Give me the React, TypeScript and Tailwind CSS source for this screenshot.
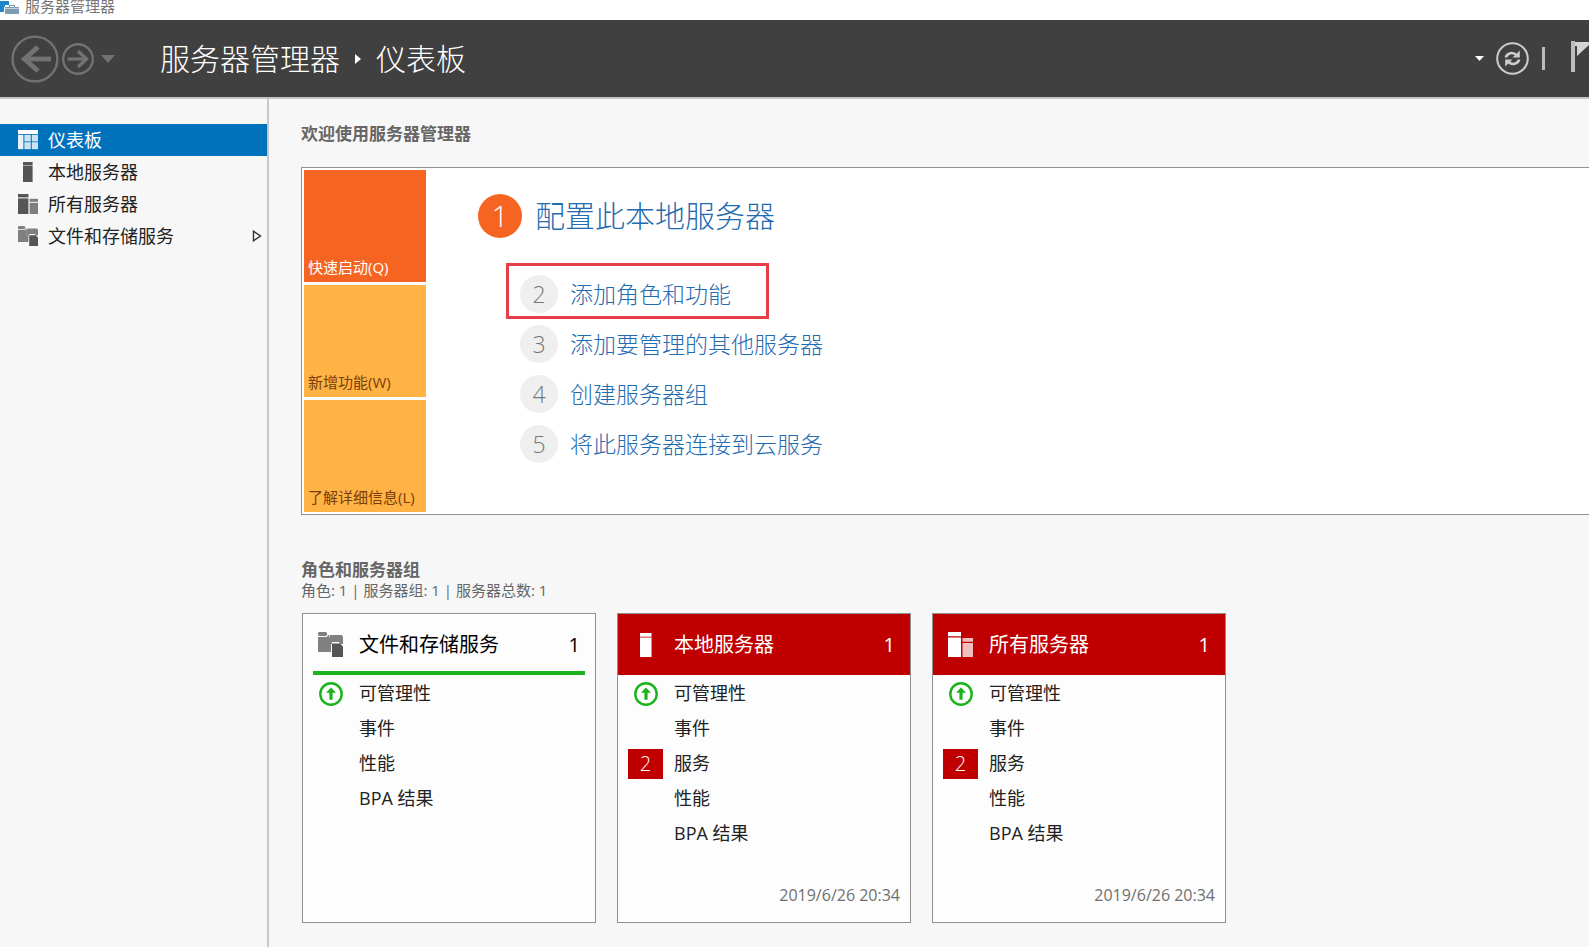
import type { ReactNode } from 'react';

interface IconProps {
  className?: string;
}

interface CardRow {
  label: string;
  status?: 'ok';
  alerts?: number;
}

interface RoleCard {
  title: string;
  count: number;
  icon: ReactNode;
  alert: boolean;
  rows: CardRow[];
  updated?: string;
}

function DashboardIcon({ className }: IconProps) {
  return (
    <svg viewBox="0 0 20 20" fill="currentColor" className={className} aria-hidden="true">
      <rect x="0" y="0" width="20" height="4" />
      <rect x="0" y="4.8" width="5.4" height="14.4" opacity="0.9" />
      <rect x="6.4" y="4.8" width="6.4" height="6.6" opacity="0.8" />
      <rect x="6.4" y="12.2" width="6.4" height="7" opacity="0.8" />
      <rect x="13.8" y="4.8" width="6.2" height="6.6" opacity="0.8" />
      <rect x="13.8" y="12.2" width="6.2" height="7" opacity="0.8" />
    </svg>
  );
}

function ServerIcon({ className }: IconProps) {
  return (
    <svg viewBox="0 0 20 20" fill="currentColor" className={className} aria-hidden="true">
      <rect x="5" y="0" width="9.6" height="3" />
      <rect x="5" y="3" width="9.6" height="1" opacity="0.5" />
      <rect x="5" y="4" width="9.6" height="16" />
    </svg>
  );
}

function ServersIcon({ className }: IconProps) {
  return (
    <svg viewBox="0 0 20 20" fill="currentColor" className={className} aria-hidden="true">
      <rect x="0" y="0" width="10.4" height="3.4" />
      <rect x="0" y="4.4" width="10.4" height="15.6" />
      <rect x="11.6" y="4.8" width="8.4" height="3" opacity="0.75" />
      <rect x="11.6" y="8.8" width="8.4" height="11.2" opacity="0.75" />
    </svg>
  );
}

function StorageIcon({ className }: IconProps) {
  return (
    <svg viewBox="0 0 25 25" className={className} aria-hidden="true">
      <path d="M1 0h7l1 1v2l-1 1h-7l-1-1v-2z" fill="#808080" />
      <path d="M0 5h9l1-2h1v9h2v8h-13z" fill="#808080" />
      <path d="M11 6l1-3h12l1 2v7h-3l-1-2h-7v2h-3z" fill="#808080" />
      <path d="M14 11.500h8l3 3v10.500h-11z" fill="#555" />
    </svg>
  );
}

function HealthyIcon() {
  return (
    <svg viewBox="0 0 24 24" className="size-6" role="img" aria-label="正常">
      <circle cx="12" cy="12" r="10.7" fill="#fff" stroke="#18b41a" strokeWidth="2.4" />
      <path d="M12 5.5l5 5.2h-3.400v7h-3.200v-7h-3.400z" fill="#18b41a" />
    </svg>
  );
}

const NAV_ITEMS = [
  { label: '仪表板', icon: <DashboardIcon className="size-5" />, active: true },
  { label: '本地服务器', icon: <ServerIcon className="size-5 text-[#555]" /> },
  { label: '所有服务器', icon: <ServersIcon className="size-5 text-[#555]" /> },
  { label: '文件和存储服务', icon: <StorageIcon className="size-5" />, expandable: true },
];

const STEPS = [
  { number: 2, label: '添加角色和功能', highlighted: true },
  { number: 3, label: '添加要管理的其他服务器' },
  { number: 4, label: '创建服务器组' },
  { number: 5, label: '将此服务器连接到云服务' },
];

const SERVER_ROWS: CardRow[] = [
  { label: '可管理性', status: 'ok' },
  { label: '事件' },
  { label: '服务', alerts: 2 },
  { label: '性能' },
  { label: 'BPA 结果' },
];

const CARDS: RoleCard[] = [
  {
    title: '文件和存储服务',
    count: 1,
    icon: <StorageIcon className="size-[25px]" />,
    alert: false,
    rows: SERVER_ROWS.filter((row) => row.label !== '服务'),
  },
  {
    title: '本地服务器',
    count: 1,
    icon: <ServerIcon className="size-6" />,
    alert: true,
    rows: SERVER_ROWS,
    updated: '2019/6/26 20:34',
  },
  {
    title: '所有服务器',
    count: 1,
    icon: <ServersIcon className="size-[25px]" />,
    alert: true,
    rows: SERVER_ROWS,
    updated: '2019/6/26 20:34',
  },
];

function TitleBar() {
  return (
    <div className="flex h-5 items-start gap-[5px] bg-white text-[15px] leading-3 text-[#777]">
      <svg viewBox="0 0 20 15" className="h-[15px] w-5 shrink-0" aria-hidden="true">
        <path d="M0 1h9v4h-4v2h-1v5h-4z" fill="#1c86c8" />
        <path d="M5 7h4v-2h6v2h4v7h-14z" fill="#7f9bb3" />
        <path d="M10 6h4v1h-4z" fill="#fff" />
        <path d="M5 8h14v1h-14z" fill="#c3d2de" />
      </svg>
      <span>服务器管理器</span>
    </div>
  );
}

function Header() {
  return (
    <header className="flex h-[79px] items-center overflow-hidden border-b-2 border-[#c4c4c4] bg-[#404040] text-white">
      <div className="flex items-center pl-[11px] text-[#727272]">
        <button type="button" aria-label="后退">
          <svg viewBox="0 0 48 48" className="size-12" fill="none" stroke="currentColor">
            <circle cx="24" cy="24" r="22.4" strokeWidth="2.4" />
            <path d="M40 24H13" strokeWidth="4.8" />
            <path d="M27 12L13.500 24L27 36" strokeWidth="5" />
          </svg>
        </button>
        <button type="button" aria-label="前进" className="ml-[3px]">
          <svg viewBox="0 0 32 32" className="size-8" fill="none" stroke="currentColor">
            <circle cx="16" cy="16" r="14.8" strokeWidth="2.400" />
            <path d="M5.5 16H24" strokeWidth="3.200" />
            <path d="M16 8L24.500 16L16 24" strokeWidth="3.400" />
          </svg>
        </button>
        <button type="button" aria-label="历史记录" className="ml-[7px]">
          <svg viewBox="0 0 14 8" className="h-2 w-3.5" fill="currentColor">
            <path d="M0 0h14l-7 8z" />
          </svg>
        </button>
      </div>

      <nav className="ml-[45px] flex items-center gap-[15px] text-[30px] leading-10 font-light">
        <a href="#server-manager">服务器管理器</a>
        <svg viewBox="0 0 6 10" className="h-2.5 w-1.5" fill="currentColor" aria-hidden="true">
          <path d="M0 0l6 5l-6 5z" />
        </svg>
        <a href="#dashboard">仪表板</a>
      </nav>

      <div className="ml-auto flex items-center text-[#ccc]">
        <button type="button" aria-label="更多" className="text-white">
          <svg viewBox="0 0 9 5" className="h-[5px] w-[9px]" fill="currentColor">
            <path d="M0 0h9l-4.500 5z" />
          </svg>
        </button>
        <button type="button" aria-label="刷新" className="ml-3">
          <svg viewBox="0 0 33 33" className="size-[33px]" fill="none" stroke="currentColor">
            <circle cx="16.5" cy="16.5" r="15.3" strokeWidth="2" />
            <path d="M9.8 15.5c1.200-4.800 7.400-6 10.700-2.300" strokeWidth="2.600" />
            <path d="M23.2 17.5c-1.200 4.800-7.400 6-10.700 2.300" strokeWidth="2.600" />
            <path d="M23.8 8.5v7h-7.300z" fill="currentColor" stroke="none" />
            <path d="M9.2 24.5v-7h7.300z" fill="currentColor" stroke="none" />
          </svg>
        </button>
        <span className="ml-[13px] h-[23px] w-[3px] bg-[#bbb]" />
        <button type="button" aria-label="通知" className="-mt-1 ml-[26px]">
          <svg viewBox="0 0 18 31" className="h-[31px] w-[18px]" fill="currentColor">
            <path d="M0 0h4v31h-4z" fill="#bdbdbd" />
            <path d="M4 1h14v3l-12 11v-10h-2z" fill="#d4d4d4" />
          </svg>
        </button>
      </div>
    </header>
  );
}

function Sidebar() {
  return (
    <aside className="w-[269px] shrink-0 border-r-2 border-[#c8c8c8] pt-[25px]">
      <ul className="text-[18px]">
        {NAV_ITEMS.map((item) => (
          <li key={item.label}>
            <a
              href={`#${item.label}`}
              className={`flex h-8 items-center gap-2.5 pr-[5px] pl-[18px] ${
                item.active ? 'bg-[#0072bc] text-white' : 'text-[#222]'
              }`}
            >
              {item.icon}
              <span>{item.label}</span>
              {item.expandable && (
                <svg viewBox="0 0 10 12" className="ml-auto h-3 w-2.5" fill="none" stroke="#333" strokeWidth="1.4" aria-hidden="true">
                  <path d="M1.500 1.200l7 4.800l-7 4.800z" />
                </svg>
              )}
            </a>
          </li>
        ))}
      </ul>
    </aside>
  );
}

function WelcomePanel() {
  const tile = 'flex h-28 w-[122px] items-end px-1 pb-[5px] text-left text-[15px] leading-5 whitespace-nowrap';

  return (
    <section className="mt-[21px] flex border border-r-0 border-[#919191] bg-white">
      <div className="flex flex-col gap-[3px] p-0.5">
        <button type="button" className={`${tile} bg-[#f56521] text-white`}>快速启动(Q)</button>
        <button type="button" className={`${tile} bg-[#ffb344] text-[#7a3d0a]`}>新增功能(W)</button>
        <button type="button" className={`${tile} bg-[#ffb344] text-[#7a3d0a]`}>了解详细信息(L)</button>
      </div>

      <div className="pt-[26px] pl-[50px] font-light text-[#1f6cb0]">
        <a href="#configure" className="flex items-center gap-[13px] text-[30px] leading-11">
          <span className="flex size-11 items-center justify-center rounded-full bg-[#f56521] text-white">1</span>
          配置此本地服务器
        </a>
        <ol className="mt-[37px] ml-[42px] space-y-3 text-[23px] leading-[38px]">
          {STEPS.map((step) => (
            <li key={step.number} className="relative">
              <a href={`#step-${step.number}`} className="flex items-center gap-3">
                <span className="flex size-[38px] items-center justify-center rounded-full bg-[#efefef] text-[#777]">
                  {step.number}
                </span>
                {step.label}
              </a>
              {step.highlighted && (
                <span className="pointer-events-none absolute -top-3 -left-3.5 h-14 w-[263px] border-3 border-[#e53e46]" />
              )}
            </li>
          ))}
        </ol>
      </div>
    </section>
  );
}

function Card({ card }: { card: RoleCard }) {
  return (
    <article className="flex h-[310px] w-[294px] flex-col border border-[#919191] bg-[#fdfdfd]">
      <div className={card.alert ? 'bg-[#c00000] px-2.5 text-white' : 'mx-2.5 border-b-4 border-[#1ab31e] text-black'}>
        <a href={`#${card.title}`} className={`flex items-center text-[20px] ${card.alert ? 'h-[61px]' : 'h-[57px] pt-1'}`}>
          <span className="flex w-[35px] justify-center">{card.icon}</span>
          <span className="ml-[11px]">{card.title}</span>
          <span className="mr-[5px] ml-auto">{card.count}</span>
        </a>
      </div>
      <ul className="px-2.5 pt-px text-[18px] text-[#222]">
        {card.rows.map((row) => (
          <li key={row.label}>
            <a href={`#${row.label}`} className="flex h-[35px] items-center gap-[11px]">
              <span className="flex w-[35px] justify-center">
                {row.status === 'ok' && <HealthyIcon />}
                {row.alerts && (
                  <span className="flex h-[30px] w-full items-center justify-center bg-[#c00000] text-[20px] font-light text-white">
                    {row.alerts}
                  </span>
                )}
              </span>
              {row.label}
            </a>
          </li>
        ))}
      </ul>
      {card.updated && <time className="mt-auto px-2.5 pb-[17px] text-right text-[16px] leading-5 text-[#707070]">{card.updated}</time>}
    </article>
  );
}

export default function App() {
  return (
    <div className="flex min-h-screen flex-col bg-[#f7f7f7] font-['Open_Sans','Noto_Sans_CJK_SC',sans-serif]">
      <TitleBar />
      <Header />
      <div className="flex flex-1">
        <Sidebar />
        <main className="min-w-0 flex-1 pt-[23px] pb-6 pl-8 text-[#666]">
          <h1 className="text-[17px] leading-6 font-bold">欢迎使用服务器管理器</h1>
          <WelcomePanel />

          <h2 className="mt-[45px] text-[17px] leading-5 font-bold">角色和服务器组</h2>
          <p className="text-[15px] leading-5">角色: 1 | 服务器组: 1 | 服务器总数: 1</p>
          <div className="mt-[13px] ml-px flex flex-wrap gap-[21px]">
            {CARDS.map((card) => (
              <Card key={card.title} card={card} />
            ))}
          </div>
        </main>
      </div>
    </div>
  );
}
